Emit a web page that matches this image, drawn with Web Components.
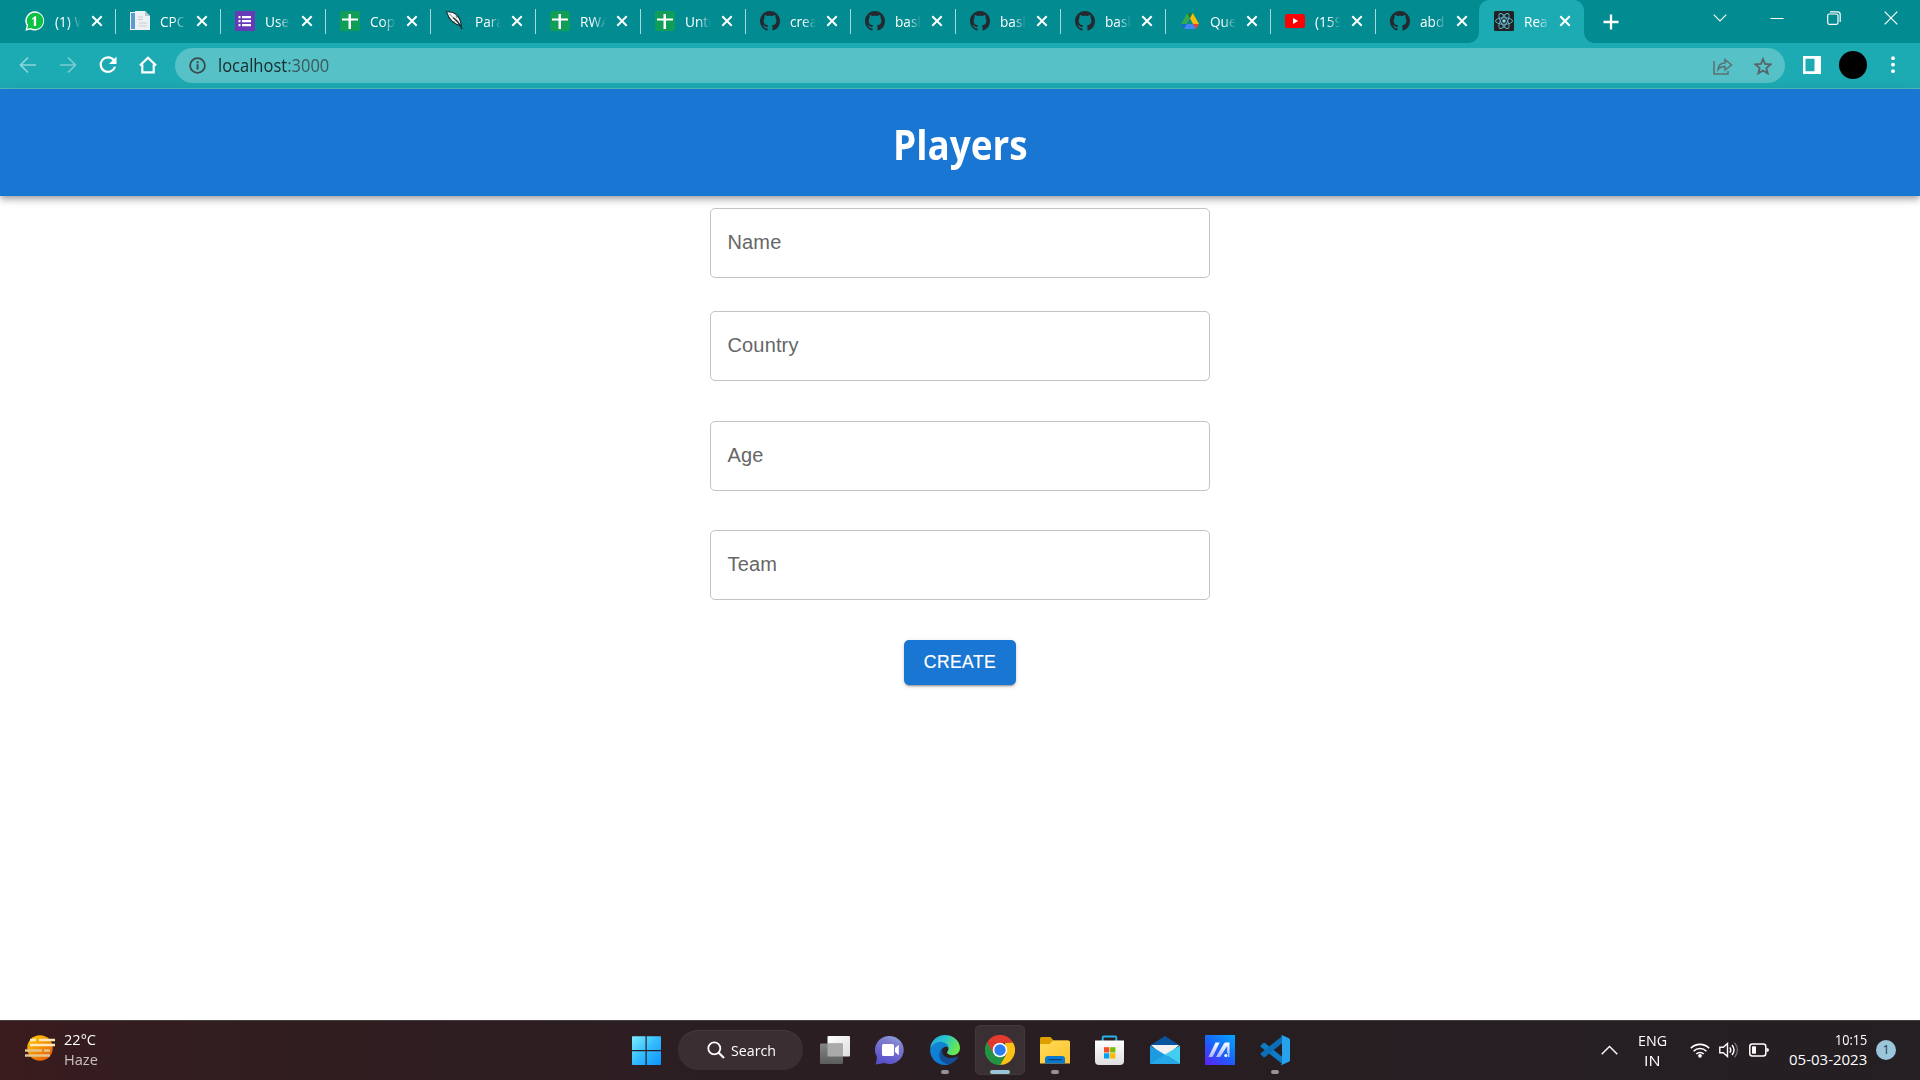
<!DOCTYPE html>
<html lang="en">
<head>
<meta charset="utf-8">
<title>Players</title>
<style>
html,body{margin:0;height:100%;overflow:hidden;background:#fff}
body{font-family:"Open Sans","Noto Sans",sans-serif}
</style>
</head>
<body>
<desktop-screen></desktop-screen>
<script>
const ICONS = {
whatsapp:[20,20,'<path d="M10 .3A9.6 9.6 0 0 0 1.7 14.8L.3 19.8l5-1.3A9.6 9.6 0 1 0 10 .3z" fill="#fff"/><path d="M10 1.7a8.2 8.2 0 0 0-6.9 12.6L2.2 17.8l3.6-.9A8.2 8.2 0 1 0 10 1.7z" fill="#0dc143"/><path d="M7 7.4l2.9-2.2h1.2V15H8.8V7.6L7 8.8z" fill="#fff"/>'],
docs:[20,20,'<path d="M0 1h13v18H0z" fill="#f4f5f6"/><path d="M1 2h4v16H1z" fill="#5a9bd0"/><path d="M5 0h10l5 5v14H5z" fill="#eef1f3"/><path d="M15 0v5h5z" fill="#b9c5cb"/><path d="M8 6h5M8 8.5h5M9 12h8M9 15h8" stroke="#c4ccd2"/>'],
forms:[20,20,'<path d="M0 0h20v20H0z" fill="#673ab7"/><path d="M3.5 5h2v2.2h-2zM7 5h9v2.2H7zM3.5 9h2v2.2h-2zM7 9h9v2.2H7zM3.5 13h2v2.2h-2zM7 13h9v2.2H7z" fill="#fff"/>'],
sheet:[20,20,'<rect width="20" height="20" rx="2" fill="#109d58"/><path d="M8.500 3h2.500v4.500h7v2h-7V18H8.500V9.500H2v-2h6.500z" fill="#fff"/>'],
feather:[20,20,'<path d="M1.500.8C9 .5 15 4.500 16.300 14.500 9.500 13.500 4 8.500 1.500.8z" fill="#f5f5f5" stroke="#18292b" stroke-width="1.100"/><path d="M8 6.500C12 9.500 15 13 17 18" stroke="#18292b" stroke-width="1.500" fill="none"/><path d="M4.500 3 8 6.500M11 4.800l1 2.200M7.800 10.500l2 .3" stroke="#5d6a6b" stroke-width=".8" fill="none"/>'],
github:[20,20,'<path transform="scale(1.25)" fill="#24292f" d="M8 0C3.580 0 0 3.580 0 8c0 3.540 2.290 6.530 5.470 7.590.4.070.55-.17.55-.38 0-.19-.01-.82-.01-1.490-2.010.37-2.530-.49-2.690-.94-.09-.23-.48-.94-.82-1.130-.28-.15-.68-.52-.01-.53.63-.01 1.080.58 1.230.82.72 1.210 1.870.87 2.330.66.070-.52.28-.87.51-1.070-1.780-.2-3.640-.89-3.640-3.950 0-.87.31-1.590.82-2.150-.08-.2-.36-1.020.08-2.120 0 0 .67-.21 2.200.82.64-.18 1.320-.27 2-.27s1.360.09 2 .27c1.530-1.040 2.200-.82 2.200-.82.44 1.100.16 1.920.08 2.120.51.56.82 1.270.82 2.150 0 3.070-1.870 3.750-3.650 3.950.29.25.54.73.54 1.480 0 1.070-.01 1.930-.01 2.200 0 .21.15.46.55.38A8.010 8.010 0 0 0 16 8c0-4.420-3.580-8-8-8z"/>'],
drive:[20,20,'<path d="M7.200 2 1 13l3 5L10 7.200z" fill="#34a853"/><path d="M7.200 2h5.600L10 7.200z" fill="#188038"/><path d="M12.800 2 19 13h-6L10 7.200z" fill="#fbbc04"/><path d="M1 13h6l-3 5z" fill="#1967d2"/><path d="M7 13h6l3 5H4z" fill="#4285f4"/><path d="M13 13h6l-3 5z" fill="#ea4335"/>'],
youtube:[20,20,'<rect y="3" width="20" height="14" rx="2.500" fill="#f00"/><path d="M8 7l5.200 3L8 13z" fill="#fff"/>'],
react:[20,20,'<rect width="20" height="20" rx="1.500" fill="#222"/><g fill="none" stroke="#5fbdd6" stroke-width=".9"><ellipse cx="10" cy="10" rx="8.500" ry="3.300"/><ellipse cx="10" cy="10" rx="8.500" ry="3.300" transform="rotate(60 10 10)"/><ellipse cx="10" cy="10" rx="8.500" ry="3.300" transform="rotate(120 10 10)"/></g><circle cx="10" cy="10" r="1.700" fill="#8adcf0"/>'],
tabclose:[12,12,'<path d="M1.300 1.300l9.400 9.400M10.700 1.300 1.300 10.700" stroke="#fff" stroke-width="2"/>'],
plus:[16,16,'<path d="M8 .5v15M.5 8h15" stroke="#fff" stroke-width="2.300"/>'],
chevdown:[14,8,'<path d="M.7.700 7 7 13.300.700" fill="none" stroke="#fff" stroke-width="1.100"/>'],
minimize:[14,14,'<path d="M.5 7.500h13" stroke="#fff"/>'],
restore:[14,14,'<rect x=".7" y="3" width="10.300" height="10.300" rx="1.500" fill="none" stroke="#fff" stroke-width="1.200"/><path d="M3 .8h7.500a2.700 2.700 0 0 1 2.700 2.700V11" fill="none" stroke="#fff" stroke-width="1.200"/>'],
winclose:[14,14,'<path d="M.7.700l12.600 12.600M13.300.700.700 13.300" stroke="#fff" stroke-width="1.200"/>'],
back:[18,18,'<path d="M17 9H2M9 1.500 1.500 9 9 16.500" fill="none" stroke="#8dd5d9" stroke-width="1.700"/>'],
fwd:[18,18,'<path d="M1 9h15M9 1.500 16.500 9 9 16.500" fill="none" stroke="#78ccd1" stroke-width="1.700"/>'],
reload:[18,18,'<path d="M14.700 4A7.300 7.300 0 1 0 16 10.700" fill="none" stroke="#fff" stroke-width="2.200"/><path d="M17.500.500v7.500H10z" fill="#fff"/>'],
home:[18,18,'<path d="M3.300 8.500v7.800h11.400V8.500M.9 9.500 9 1.700l8.100 7.800" fill="none" stroke="#fff" stroke-width="2.200"/>'],
info:[17,17,'<circle cx="8.500" cy="8.500" r="7.400" fill="none" stroke="#3a4a4d" stroke-width="1.800"/><path d="M7.600 7.300h1.900v5.200H7.600zM7.600 4.300h1.900v1.900H7.600z" fill="#3a4a4d"/>'],
share:[20,18,'<path d="M1 4v13h14v-3M5 12.500c.4-4 3-6.500 7-6.500V2.500L18.500 8 12 13V9.500c-3.500 0-5.500 1-7 3z" fill="none" stroke="#5c6f73" stroke-width="1.500"/>'],
star:[18,18,'<path d="M9 2l2 5 5.600.4-4.300 3.600 1.400 5.400L9 13.500l-4.700 2.900L5.700 11 1.400 7.400 7 7z" fill="none" stroke="#596468" stroke-width="1.800"/>'],
panel:[18,18,'<path d="M0 0h18v18H0zM2.500 2.800v12.400h9V2.800z" fill="#fff" fill-rule="evenodd"/>'],
dots:[4,18,'<circle cx="2" cy="2.200" r="1.900" fill="#fff"/><circle cx="2" cy="8.700" r="1.900" fill="#fff"/><circle cx="2" cy="15.200" r="1.900" fill="#fff"/>'],
haze:[30,26,'<defs><linearGradient id="a" x2=".8" y2="1"><stop stop-color="#ffd400"/><stop offset="1" stop-color="#e8590b"/></linearGradient></defs><circle cx="15" cy="13" r="12.800" fill="url(#a)"/><path d="M5 5h6M14 5h16M5 10h25" stroke="#ffe9bb" stroke-width="2.400"/><path d="M0 15.500h17M19 15.500h6M0 20.500h25" stroke="#e5c48f" stroke-width="2.400"/>'],
windows:[30,30,'<defs><linearGradient id="a" gradientUnits="userSpaceOnUse" x1="0" y1="0" x2="29" y2="29"><stop stop-color="#7df1fd"/><stop offset=".5" stop-color="#35bdff"/><stop offset="1" stop-color="#0b95fb"/></linearGradient></defs><path transform="translate(-.5 .5)" d="M.5 1.500a.8.8 0 0 1 .8-.8H14v13.800H.5zM15.200.700h13.500a.8.8 0 0 1 .8.8v13H15.200zM.5 15.700H14v13.800H1.300a.8.8 0 0 1-.8-.8zM15.200 15.700h14.300v13a.8.8 0 0 1-.8.8H15.200z" fill="url(#a)"/>'],
search:[18,18,'<circle cx="7.300" cy="7.300" r="6" fill="none" stroke="#fff" stroke-width="1.800"/><path d="M11.500 11.500 17 17" stroke="#fff" stroke-width="2.200"/>'],
taskview:[30,30,'<defs><linearGradient id="a" x2="1" y2="1"><stop stop-color="#fff"/><stop offset="1" stop-color="#dedede"/></linearGradient><linearGradient id="b" x2="0" y2="1"><stop stop-color="#858585"/><stop offset="1" stop-color="#5c5c5c"/></linearGradient></defs><rect x="7.500" y="1" width="22.500" height="20.500" rx="1" fill="url(#a)"/><rect y="8.500" width="23" height="20.500" rx="1" fill="url(#b)"/><path d="M7.500 8.500H22a1 1 0 0 1 1 1v12H7.500z" fill="#aaa"/>'],
chat:[30,30,'<defs><linearGradient id="a" x1=".8" y1="0" x2=".4" y2="1"><stop stop-color="#88a9e7"/><stop offset=".25" stop-color="#8180ce"/><stop offset="1" stop-color="#5750cb"/></linearGradient></defs><path d="M15 1a14 14 0 1 1-5.500 27L.8 29.500 2 22A14 14 0 0 1 15 1z" fill="url(#a)"/><rect x="7" y="9" width="12" height="12" rx="1.500" fill="#fff"/><path d="M20 13l3.800-3.200v10.400L20 17z" fill="#fff"/>'],
edge:[30,30,'<defs><linearGradient id="a" x2="1" y2=".35"><stop stop-color="#26a9df"/><stop offset=".5" stop-color="#27c3d0"/><stop offset="1" stop-color="#69ea4d"/></linearGradient><linearGradient id="b" x2=".6" y2="1"><stop stop-color="#1387cf"/><stop offset="1" stop-color="#0879d7"/></linearGradient></defs><path d="M.2 13.300C1 5.500 7.200 0 15 0c8.500 0 15 6 15 13 0 4.500-3.500 7.200-7.300 7.200-3.500 0-5.700-1.300-5.700-2.700 0-1.100 1.500-1.400 1.500-4 0-3-3-5-7-5-5 0-9 1.500-11.300 4.800z" fill="url(#a)"/><path d="M.1 14.500C1.500 9.500 6 7 10.500 7c4.700 0 7.900 2.500 8 6-1-1.200-2.500-1.600-4-1-4 1.500-4.500 7.500-1.800 11.500C15 27 20 28 24 26c-2.400 2.500-5.500 4-9 4C6.700 30 0 23.500.1 14.500z" fill="url(#b)"/><path d="M12.300 13.500c-4.500 3.500-4.500 14 5.700 15.600 4.500-.6 8.500-3.600 10-6.800.2-.7-.3-1-.9-.6C20 25 10.500 22.500 12.300 13.500z" fill="#144e94"/>'],
chrome:[30,30,'<path d="M2 7.500A15 15 0 0 1 28 7.500L15 8z" fill="#e33b2e"/><path d="M2 7.500A15 15 0 0 0 15 30l6-11.500-6-4z" fill="#229342"/><path d="M28 7.500A15 15 0 0 1 15 30l6.500-11.200L20 8z" fill="#fbc116"/><path d="M2 7.500 8.500 18.700 15 8l13-.5z" fill="#e33b2e"/><path d="M2 7.500l6.500 11.200L15 22l5-1-5 9A15 15 0 0 1 2 7.500z" fill="#229342"/><circle cx="15" cy="15" r="7.300" fill="#fff"/><circle cx="15" cy="15" r="5.700" fill="#2b7df2"/>'],
explorer:[30,30,'<defs><linearGradient id="a" x2="1" y2="1"><stop stop-color="#ffdc59"/><stop offset="1" stop-color="#fcc22c"/></linearGradient></defs><path d="M0 3.500A1.500 1.500 0 0 1 1.500 2h9l3 3.500H28V14H0z" fill="#dda000"/><path d="M0 9h9.500l3.500-3.500h15.500A1.500 1.500 0 0 1 30 7v21.500H0z" fill="url(#a)"/><path d="M5 28.500V24a3 3 0 0 1 3-3h14a3 3 0 0 1 3 3v4.500z" fill="#0878ce"/><path d="M8.500 24.700h13" stroke="#07457c" stroke-width="1.300"/>'],
store:[30,30,'<defs><linearGradient id="a" x2="0" y2="1"><stop stop-color="#fff"/><stop offset="1" stop-color="#dedede"/></linearGradient></defs><path d="M7.700 6.500v-4a1 1 0 0 1 1-1h11.600a1 1 0 0 1 1 1v4" fill="none" stroke="#25b3e9" stroke-width="1.900"/><path d="M0 5.500h29V26a4 4 0 0 1-4 4H4a4 4 0 0 1-4-4z" fill="url(#a)"/><path d="M9 12.200h5.300v5.300H9z" fill="#f25022"/><path d="M15.100 12.200h5.300v5.300h-5.300z" fill="#7fba00"/><path d="M9 18.200h5.300v5.300H9z" fill="#00a4ef"/><path d="M15.100 18.200h5.300v5.300h-5.300z" fill="#ffb900"/>'],
mail:[30,30,'<path d="M0 10.500 15 1l15 9.500z" fill="#07539c"/><path d="M1 10h28L17 21h-4z" fill="#f1f1f1"/><path d="M0 10.500 15.500 20 30 29H0z" fill="#1c9be0"/><path d="M30 10.500V29L15 19.500z" fill="#42cdf2"/><path d="M0 29 15 19.500 30 29z" fill="#26a7e8"/>'],
ma:[30,30,'<defs><linearGradient id="a" x1=".1" y1="1" x2=".9" y2="0"><stop stop-color="#5725f5"/><stop offset=".5" stop-color="#1963fa"/><stop offset="1" stop-color="#05a2fb"/></linearGradient><linearGradient id="b" x2="0" y2="1"><stop stop-color="#fff"/><stop offset="1" stop-color="#a9b6ff"/></linearGradient></defs><path d="M0 0h30v30H0z" fill="url(#a)"/><path d="M3.500 22 10.500 7.500h4.200L7.500 22z" fill="url(#b)"/><path d="M11 22l8-13.500q.6-1 1.700-1H24.500V18h-2.300v-7L15.200 22z" fill="url(#b)"/><circle cx="20.800" cy="20.500" r="1.500" fill="#fff"/><path d="M22.800 17h1.700v5h-1.700z" fill="#a9c6ff"/>'],
vscode:[30,30,'<path d="M1 10.300 3.300 8q.8-.6 1.700 0L23 22.500v7L.9 12q-1-.8.1-1.700z" fill="#0d7cc4"/><path d="M1 19.700 3.300 22q.8.600 1.700 0L23 7.500v-7L.9 18q-1 .8.1 1.700z" fill="#0a6fb6"/><path d="M22.300.300 29 3.200q1 .5 1 1.500v20.600q0 1-1 1.500l-6.700 2.900q-1 .3-1.800-.5 1.500.6 1.500-1V1.800q0-1.600-1.500-1 .8-.8 1.800-.5z" fill="#26a1ec"/>'],
chevup:[17,10,'<path d="M.7 9.200 8.500 1.500l7.800 7.700" fill="none" stroke="#fff" stroke-width="1.400"/>'],
wifi:[20,16,'<g fill="none" stroke="#fff" stroke-width="1.600"><path d="M.8 6.200a13 13 0 0 1 18.400 0"/><path d="M3.600 9.200a9 9 0 0 1 12.800 0"/><path d="M6.300 12a5.300 5.300 0 0 1 7.400 0"/></g><circle cx="10" cy="13.800" r="1.900" fill="#fff"/>'],
sound:[20,16,'<path d="M.8 5.200h3.500L8.500 1.500v13l-4.200-3.700H.8z" fill="none" stroke="#fff" stroke-width="1.400"/><path d="M10.800 5.300q2 2.700 0 5.400M13 3q4 5 0 10" fill="none" stroke="#fff" stroke-width="1.400"/><path d="M15.500.8q6 7.200 0 14.400" fill="none" stroke="#6d686b" stroke-width="1.400"/>'],
battery:[20,14,'<rect x=".8" y=".9" width="16" height="12" rx="2.500" fill="none" stroke="#fff" stroke-width="1.500"/><rect x="3" y="3.200" width="4" height="7.500" rx=".8" fill="#fff"/><path d="M17.500 5q2.500 0 2.500 2t-2.500 2z" fill="#fff"/>']
};

function define(name, render, after) {
  customElements.define(name, class extends HTMLElement {
    connectedCallback() {
      if (this.shadowRoot) return;
      this.attachShadow({mode: 'open'}).innerHTML = render(this);
      if (after) after(this);
    }
  });
}

define('ui-icon', el => {
  const [w, h, body] = ICONS[el.getAttribute('name')];
  return `<style>:host{display:block;flex:none;width:${w}px;height:${h}px}svg{display:block}</style>
  <svg width="${w}" height="${h}" viewBox="0 0 ${w} ${h}">${body}</svg>`;
});

/* Text condensed or widened to an exact advance width */
define('fit-text', el => `<style>:host{display:block;flex:none;width:${el.getAttribute('w')}px;white-space:nowrap}
  span{display:inline-block;transform-origin:0 50%}</style><span><slot></slot></span>`,
  el => {
    const s = el.shadowRoot.querySelector('span');
    s.style.transform = `scaleX(${el.getAttribute('w') / s.offsetWidth})`;
  });

define('browser-tab', el => `<style>
  :host{display:flex;align-items:center;box-sizing:border-box;width:105px;height:43px;padding:0 0 1px 14px;flex:none;position:relative;color:#fff}
  .t{width:26px;margin-left:10px;overflow:hidden;font:15px/22px "Open Sans","Noto Sans",sans-serif;white-space:nowrap;
    -webkit-mask-image:linear-gradient(90deg,#000 50%,transparent 100%);mask-image:linear-gradient(90deg,#000 50%,transparent 100%)}
  .t span{display:inline-block;transform:scaleX(.91);transform-origin:0 50%}
  .x{margin-left:9.500px}
  i{position:absolute;right:0;top:9px;width:1px;height:25px;background:#a5dadc}
  :host([last]) i,:host([active]) i{display:none}
  :host([active]){background:#1dabb3;border-radius:10px 10px 0 0;margin-left:-2px;padding-left:15px}
  :host([active]) .x{margin-left:8.500px}
  :host([active])::before,:host([active])::after{content:"";position:absolute;bottom:0;width:10px;height:10px}
  :host([active])::before{right:100%;background:radial-gradient(circle at 0 0,transparent 9.5px,#1dabb3 10px)}
  :host([active])::after{left:100%;background:radial-gradient(circle at 100% 0,transparent 9.5px,#1dabb3 10px)}
  </style><ui-icon name="${el.getAttribute('icon')}"></ui-icon><div class="t"><span><slot></slot></span></div><ui-icon class="x" name="tabclose"></ui-icon><i></i>`);

define('tab-strip', () => {
  const tabs = [['whatsapp','(1) W'],['docs','CPC'],['forms','User'],['sheet','Copy'],['feather','Para'],['sheet','RWA'],['sheet','Unti'],['github','crea'],['github','bash'],['github','bash'],['github','bash'],['drive','Que'],['youtube','(159'],['github','abd'],['react','Rea']];
  return `<style>:host{display:flex;height:43px;background:#028b91;padding-left:11px;align-items:center}
  .plus{margin-left:19px}.win{margin-left:auto;display:flex;align-items:center;padding:0 22px 7px 0;gap:43px}</style>
  ${tabs.map(([i,t],n)=>`<browser-tab icon="${i}"${n===13?' last':''}${n===14?' active':''}>${t}</browser-tab>`).join('')}
  <ui-icon class="plus" name="plus"></ui-icon>
  <div class="win"><ui-icon name="chevdown"></ui-icon><ui-icon name="minimize"></ui-icon><ui-icon name="restore"></ui-icon><ui-icon name="winclose"></ui-icon></div>`;
});

define('address-bar', () => `<style>
  :host{display:flex;align-items:center;box-sizing:border-box;height:46px;background:#1dabb3;border-bottom:1px solid #4fbfc0;padding-left:19px}
  .nav{display:flex;gap:22px;width:156px;flex:none;margin-bottom:1px}
  .box{display:flex;align-items:center;box-sizing:border-box;width:1610px;height:35px;border-radius:18px;background:#56c1c6;padding:0 13px 0 14px;flex:none}
  .url{margin:0 0 1px 12px;font:18px/24px "Open Sans","Noto Sans",sans-serif;color:#3c595c}
  b{font-weight:400;color:#172c2f}
  .end{display:flex;gap:21px;margin-left:auto}
  .tools{display:flex;align-items:center;margin:0 0 1px 18px}
  .avatar{width:28px;height:28px;border-radius:50%;background:#000;margin:0 24px 0 18px}
  </style><div class="nav"><ui-icon name="back"></ui-icon><ui-icon name="fwd"></ui-icon><ui-icon name="reload"></ui-icon><ui-icon name="home"></ui-icon></div>
  <div class="box"><ui-icon name="info"></ui-icon><fit-text class="url" w="111"><b>localhost</b>:3000</fit-text>
  <div class="end"><ui-icon name="share"></ui-icon><ui-icon name="star"></ui-icon></div></div>
  <div class="tools"><ui-icon name="panel"></ui-icon><div class="avatar"></div><ui-icon name="dots"></ui-icon></div>`);

define('app-header', () => `<style>
  :host{display:flex;justify-content:center;align-items:center;box-sizing:border-box;height:107px;padding-top:2px;background:#1976d2;color:#fff;
  box-shadow:0 2.5px 5px -1px rgba(0,0,0,.2),0 5px 6px 0 rgba(0,0,0,.14),0 1px 12px 0 rgba(0,0,0,.12);
  font:700 41px/56px "Open Sans","Noto Sans",sans-serif;position:relative}
  </style><fit-text w="135"><slot></slot></fit-text>`);

define('text-field', () => `<style>
  :host{display:block;box-sizing:border-box;width:500px;height:70px;border:1px solid #c4c4c4;border-radius:5px;
  padding:19px 16.500px;font:20px/28px "Liberation Sans",Arial,sans-serif;color:#666;letter-spacing:.15px}
  </style><slot></slot>`);

define('action-button', () => `<style>
  :host{display:block;box-sizing:border-box;width:112px;height:45px;border-radius:5px;background:#1976d2;color:#fff;text-align:center;
  font:17.5px/44px "Liberation Sans",Arial,sans-serif;letter-spacing:.45px;-webkit-text-stroke:.2px #fff;
  box-shadow:0 3px 1px -2px rgba(0,0,0,.2),0 2px 2px 0 rgba(0,0,0,.14),0 1px 5px 0 rgba(0,0,0,.12)}
  </style><slot></slot>`);

define('player-form', () => `<style>
  :host{display:flex;flex-direction:column;align-items:center;padding-top:12px}
  text-field:nth-of-type(1){margin-bottom:33px}
  text-field:nth-of-type(2){margin-bottom:40px}
  text-field:nth-of-type(3){margin-bottom:39px}
  text-field:nth-of-type(4){margin-bottom:40px}
  </style><text-field>Name</text-field><text-field>Country</text-field><text-field>Age</text-field><text-field>Team</text-field><action-button>CREATE</action-button>`);

define('task-app', el => `<style>
  :host{display:flex;width:55px;height:60px;align-items:center;justify-content:center;flex:none}
  .c{display:flex;flex-direction:column;align-items:center;box-sizing:border-box;width:50px;height:50px;border-radius:5px;border:1px solid transparent;padding-top:9px}
  .bar{height:4px;width:8px;border-radius:2px;margin-top:5px}
  :host([open]) .bar{background:#989396}
  :host([current]) .bar{width:20px;background:#9ac5d9}
  :host([current]) .c{background:#3a2f33;border-color:#43383c}
  </style><div class="c"><ui-icon name="${el.getAttribute('icon')}"></ui-icon><div class="bar"></div></div>`);

define('task-bar', () => `<style>
  :host{display:flex;box-sizing:border-box;height:60px;color:#fff;font:15px/20px "Open Sans","Noto Sans",sans-serif;
  background:linear-gradient(90deg,#3b1b1d 0,#341c1f 100px,#301d20 300px,#2b1e22 700px,#271e22 1300px,#241f23 1920px);box-shadow:inset 0 1px #474043}
  .weather{display:flex;box-sizing:border-box;width:619px;padding:14px 0 0 25px}
  .weather ui-icon{margin:1px 9px 0 0}
  .dim{color:#c9c0c1}
  .apps{display:flex;align-items:center}
  .search{display:flex;align-items:center;box-sizing:border-box;width:125px;height:40px;border-radius:20px;background:#3a2e32;margin:0 4.500px 0 4px;padding-left:29px;gap:6px;box-shadow:inset 0 1px #44393d}
  .tray{display:flex;align-items:center;margin-left:auto;padding-right:24px}
  .tray .lines{display:flex;flex-direction:column}
  .clock{align-items:flex-end;margin:0 9px 2px 20px}
  .badge{width:20px;height:20px;border-radius:50%;background:#9bc5d9;color:#243b48;font-size:12.5px;text-align:center}
  </style>
  <div class="weather"><ui-icon name="haze"></ui-icon><div style="margin-top:-5px"><fit-text w="32">22°C</fit-text><fit-text class="dim" w="34">Haze</fit-text></div></div>
  <div class="apps"><task-app icon="windows"></task-app>
  <div class="search"><ui-icon name="search"></ui-icon><fit-text w="45.500">Search</fit-text></div>
  <task-app icon="taskview"></task-app><task-app icon="chat"></task-app><task-app icon="edge" open></task-app><task-app icon="chrome" open current></task-app><task-app icon="explorer" open></task-app><task-app icon="store"></task-app><task-app icon="mail"></task-app><task-app icon="ma"></task-app><task-app icon="vscode" open></task-app></div>
  <div class="tray"><ui-icon name="chevup" style="margin-right:20px"></ui-icon>
  <div class="lines" style="align-items:center;margin-right:22.500px"><fit-text w="29.500">ENG</fit-text><fit-text w="16">IN</fit-text></div>
  <ui-icon name="wifi"></ui-icon><ui-icon name="sound" style="margin:0 10px 0 9.500px"></ui-icon><ui-icon name="battery"></ui-icon>
  <div class="lines clock"><fit-text w="32">10:15</fit-text><fit-text w="78">05-03-2023</fit-text></div><div class="badge">1</div></div>`);

define('desktop-screen', () => `<style>
  :host{display:flex;flex-direction:column;width:1920px;height:1080px;overflow:hidden;background:#fff}
  tab-strip,address-bar,app-header,task-bar{flex:none}
  player-form{flex:1}
  </style><tab-strip></tab-strip><address-bar></address-bar><app-header>Players</app-header><player-form></player-form><task-bar></task-bar>`);
</script>
</body>
</html>
